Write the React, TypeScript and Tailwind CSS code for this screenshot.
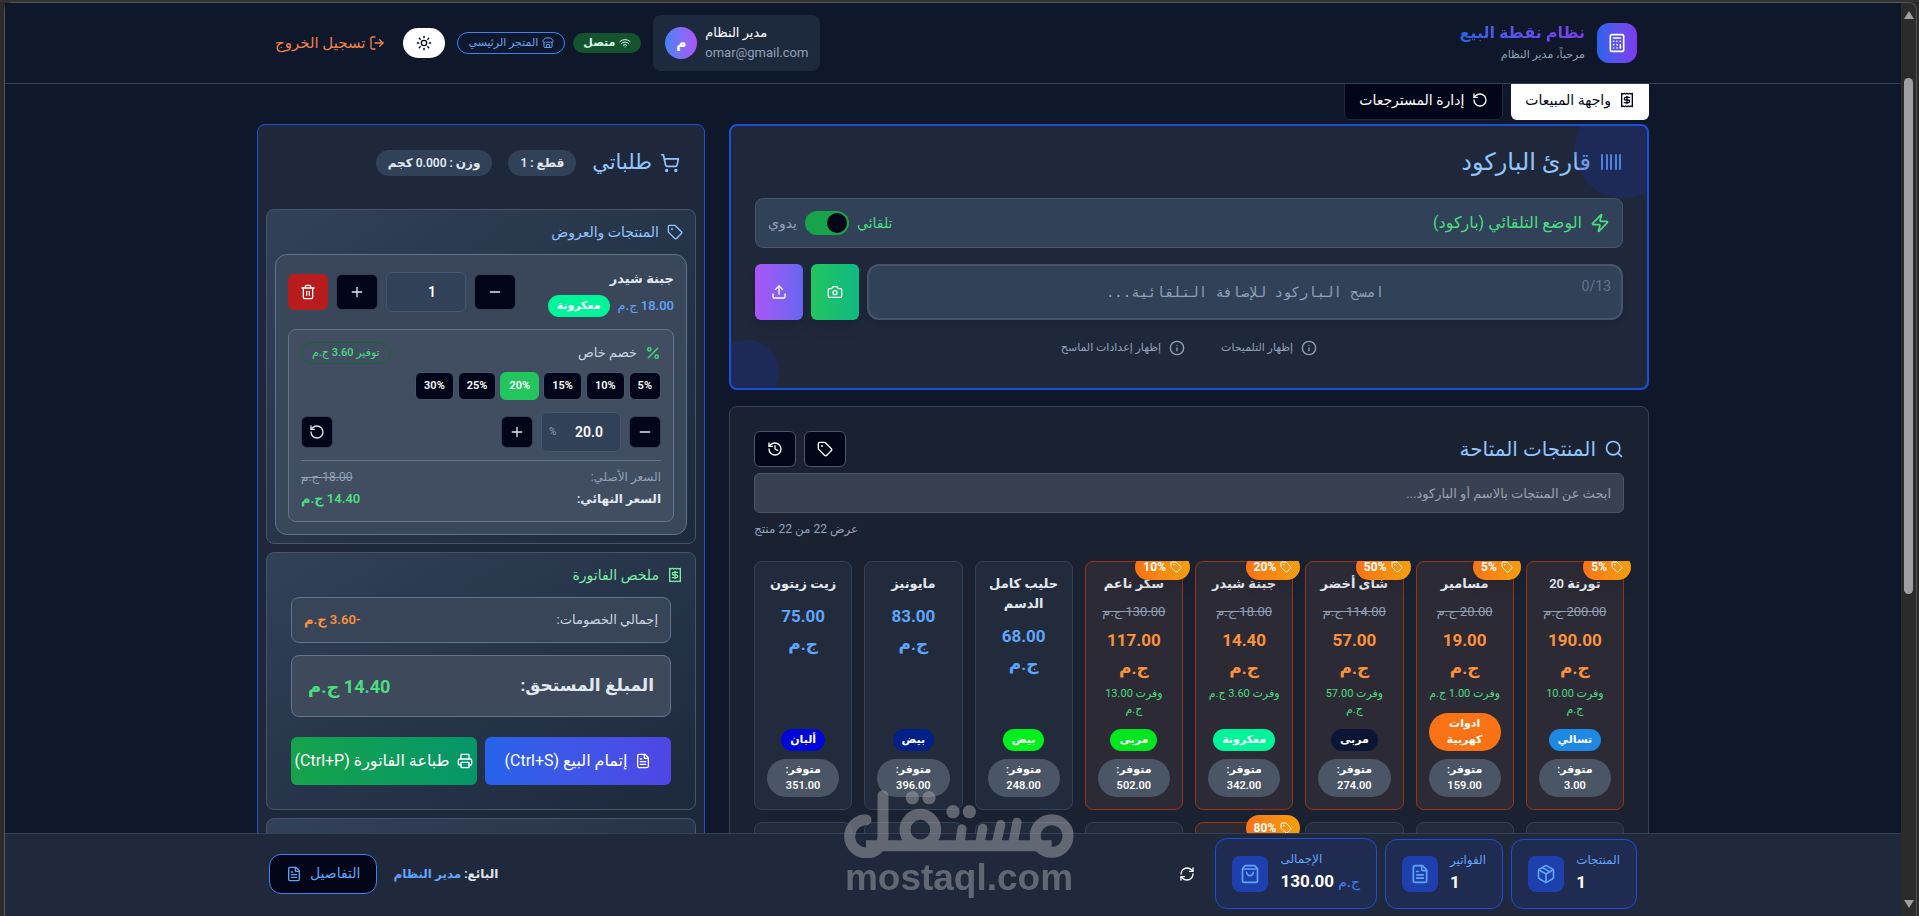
import { useState, type ReactNode } from "react";
import {
  Barcode,
  Calculator,
  Camera,
  FileText,
  History,
  Info,
  LogOut,
  Minus,
  Package,
  Percent,
  Plus,
  Printer,
  Receipt,
  RefreshCw,
  RotateCcw,
  Search,
  ShoppingBag,
  ShoppingCart,
  Store,
  Sun,
  Tag,
  Trash2,
  Upload,
  Wifi,
  Zap,
} from "lucide-react";

type Product = {
  name: string;
  price: string;
  oldPrice?: string;
  saved?: string;
  discount?: number;
  category: string;
  color: string;
  stock: string;
};

const products: Product[] = [
  { name: "تورتة 20", price: "190.00", oldPrice: "200.00", saved: "10.00", discount: 5, category: "تسالي", color: "bg-[#1e88e5]", stock: "3.00" },
  { name: "مسامير", price: "19.00", oldPrice: "20.00", saved: "1.00", discount: 5, category: "ادوات كهربية", color: "bg-[#f97316]", stock: "159.00" },
  { name: "شاى أخضر", price: "57.00", oldPrice: "114.00", saved: "57.00", discount: 50, category: "مربى", color: "bg-[#0b1636]", stock: "274.00" },
  { name: "جبنة شيدر", price: "14.40", oldPrice: "18.00", saved: "3.60", discount: 20, category: "معكرونة", color: "bg-[#00f59b]", stock: "342.00" },
  { name: "سكر ناعم", price: "117.00", oldPrice: "130.00", saved: "13.00", discount: 10, category: "مربى", color: "bg-[#00e61f]", stock: "502.00" },
  { name: "حليب كامل الدسم", price: "68.00", category: "بيض", color: "bg-[#00f01e]", stock: "248.00" },
  { name: "مايونيز", price: "83.00", category: "بيض", color: "bg-[#001f87]", stock: "396.00" },
  { name: "زيت زيتون", price: "75.00", category: "ألبان", color: "bg-[#0007d6]", stock: "351.00" },
];

const loadingCards: (number | null)[] = [null, null, null, 80, null, null, null, null];

const panel = "rounded-lg border border-slate-600 bg-gradient-to-br from-slate-700 to-slate-800";
const darkButton = "flex items-center justify-center rounded-md border border-slate-700 bg-slate-950 text-slate-200";

function Header() {
  return (
    <header className="shrink-0 border-b border-slate-700 bg-[#0f172a]">
      <div className="mx-auto flex h-20 max-w-[1400px] items-center justify-between px-4">
        <div className="flex items-center gap-3">
          <div className="flex h-10 w-10 items-center justify-center rounded-xl bg-gradient-to-r from-[#2563eb] to-[#7c3aed] text-white">
            <Calculator size={20} />
          </div>
          <div>
            <h1 className="bg-gradient-to-r from-[#2563eb] to-[#7c3aed] bg-clip-text text-[16px] leading-6 font-bold text-transparent">
              نظام نقطة البيع
            </h1>
            <p className="text-[11px] leading-5 text-slate-400">مرحباً، مدير النظام</p>
          </div>
        </div>

        <div className="flex items-center gap-3">
          <div dir="ltr" className="flex h-14 items-center gap-2 rounded-lg bg-slate-800 px-3">
            <div className="flex h-8 w-8 items-center justify-center rounded-full bg-gradient-to-r from-[#3b82f6] to-[#a855f7] text-sm font-bold text-white">
              م
            </div>
            <div>
              <p className="text-[13px] leading-5 font-medium text-white">مدير النظام</p>
              <p className="text-[13px] leading-5 text-slate-400">omar@gmail.com</p>
            </div>
          </div>
          <span className="flex h-5 items-center gap-1 rounded-full bg-[#14532d] px-2.5 text-[11px] font-semibold text-green-100">
            <Wifi size={12} />
            متصل
          </span>
          <span className="-mr-1 flex h-[22px] items-center gap-1 rounded-full border border-[#3b82f6] px-2.5 text-[11px] font-medium text-[#60a5fa]">
            <Store size={12} />
            المتجر الرئيسي
          </span>
          <button aria-label="الوضع الفاتح" className="flex h-[30px] w-[42px] items-center justify-center rounded-full bg-white text-slate-950">
            <Sun size={16} />
          </button>
          <button className="flex items-center gap-1 px-1.5 text-[15px] text-[#f0804c]">
            <LogOut size={16} />
            تسجيل الخروج
          </button>
        </div>
      </div>
    </header>
  );
}

function Scanner() {
  const [auto, setAuto] = useState(true);
  const [code, setCode] = useState("");

  return (
    <section className="relative overflow-hidden rounded-lg border-2 border-[#1d4ed8] bg-[#1e283a] px-6 pt-5 pb-7">
      <h2 className="flex h-8 items-center gap-2 text-[24px] font-medium text-[#93c5fd]">
        <Barcode size={24} className="text-[#60a5fa]" />
        قارئ الباركود
      </h2>

      <div className="mt-5 flex h-[50px] items-center justify-between rounded-lg border border-slate-600 bg-slate-700 px-3">
        <span className="flex items-center gap-2 text-[16px] text-[#4ade80]">
          <Zap size={20} />
          الوضع التلقائي (باركود)
        </span>
        <label className="flex cursor-pointer items-center gap-2 text-[14px]">
          <span className="text-[#4ade80]">تلقائي</span>
          <input type="checkbox" className="sr-only" checked={auto} onChange={(e) => setAuto(e.target.checked)} />
          <span className={`flex h-6 w-11 items-center rounded-full p-0.5 ${auto ? "justify-start bg-[#16a34a]" : "justify-end bg-slate-600"}`}>
            <span className="h-5 w-5 rounded-full bg-slate-950" />
          </span>
          <span className="text-slate-400">يدوي</span>
        </label>
      </div>

      <div className="mt-4 flex gap-2">
        <div className="relative min-w-0 flex-1">
          <input
            aria-label="الباركود"
            value={code}
            maxLength={13}
            onChange={(e) => setCode(e.target.value)}
            placeholder="امسح الباركود للإضافة التلقائية..."
            className="h-14 w-full rounded-xl border-2 border-slate-600 bg-slate-700 px-4 text-center font-['DejaVu_Sans_Mono',monospace] text-[14px] text-white shadow-md placeholder:text-slate-400"
          />
          <span className="absolute top-3 right-3 text-[14px] leading-5 text-slate-500">{code.length}/13</span>
        </div>
        <button aria-label="الكاميرا" className="flex h-14 w-12 items-center justify-center rounded-md bg-gradient-to-r from-[#22c55e] to-[#10b981] text-white shadow-lg">
          <Camera size={16} />
        </button>
        <button aria-label="رفع صورة" className="flex h-14 w-12 items-center justify-center rounded-md bg-gradient-to-r from-[#a855f7] to-[#6366f1] text-white shadow-lg">
          <Upload size={16} />
        </button>
      </div>

      <div className="mt-4 flex items-center justify-center gap-3 text-[11px] text-slate-400">
        <button className="flex h-6 items-center gap-2 px-3">
          <Info size={16} />
          إظهار التلميحات
        </button>
        <button className="flex h-6 items-center gap-2 px-3">
          <Info size={16} />
          إظهار إعدادات الماسح
        </button>
      </div>

      <div className="pointer-events-none absolute -top-6 -right-6 h-24 w-24 rounded-full bg-[#1e32a0]/30" />
      <div className="pointer-events-none absolute -bottom-4 -left-4 h-16 w-16 rounded-full bg-[#1e32a0]/30" />
    </section>
  );
}

function Pill({ className, children }: { className: string; children: ReactNode }) {
  return (
    <span className={`rounded-full border border-transparent bg-origin-border px-2 py-0.5 text-center text-[11px] leading-4 font-semibold text-white ${className}`}>
      {children}
    </span>
  );
}

function DiscountTag({ value }: { value: number }) {
  return (
    <span className="absolute -top-2 -right-2 flex items-center gap-1 rounded-full bg-gradient-to-r from-[#f97316] to-[#f59e0b] px-2 py-[5px] text-[12px] leading-4 font-bold text-white shadow-lg">
      <Tag size={12} />
      {value}%
    </span>
  );
}

function ProductCard({ product }: { product: Product }) {
  const sale = product.discount !== undefined;
  return (
    <button
      className={`relative flex h-[249px] min-w-0 flex-col items-center rounded-lg border p-3 text-center ${
        sale ? "border-[#9a3412] bg-[#2c2a35]" : "border-slate-700 bg-[#222b3b]"
      }`}
    >
      <span className="text-[13px] leading-5 font-semibold text-slate-200">{product.name}</span>
      {sale && <span className="-mx-1 mt-2 text-[13px] leading-5 text-slate-400 line-through">{product.oldPrice} ج.م</span>}
      <span className={`w-14 text-[17px] leading-7 font-bold ${sale ? "mt-1 text-[#fb923c]" : "mt-2 text-[#60a5fa]"}`}>
        {product.price} ج.م
      </span>
      {sale && <span className="mt-1 text-[11px] leading-4 text-[#4ade80]">وفرت {product.saved} ج.م</span>}
      <span className="mt-auto flex w-full flex-col items-center gap-2">
        <Pill className={product.color}>{product.category}</Pill>
        <Pill className="w-full bg-gray-600">متوفر: {product.stock}</Pill>
      </span>
      {product.discount !== undefined && <DiscountTag value={product.discount} />}
    </button>
  );
}

function Products() {
  return (
    <section className="mt-4 rounded-lg border border-slate-700 bg-[#1a2232] p-6">
      <div className="flex h-9 items-center justify-between">
        <h2 className="flex items-center gap-2 text-[20px] font-medium text-[#93c5fd]">
          <Search size={20} />
          المنتجات المتاحة
        </h2>
        <div className="flex gap-2">
          <button aria-label="العروض" className="flex h-9 w-[42px] items-center justify-center rounded-md border border-gray-600 bg-slate-950 text-white">
            <Tag size={16} />
          </button>
          <button aria-label="السجل" className="flex h-9 w-[42px] items-center justify-center rounded-md border border-gray-600 bg-slate-950 text-white">
            <History size={16} />
          </button>
        </div>
      </div>
      <input
        aria-label="بحث"
        placeholder="ابحث عن المنتجات بالاسم أو الباركود..."
        className="mt-1.5 h-10 w-full rounded-md border border-gray-600 bg-[#384151] px-3 text-[13px] text-white placeholder:text-gray-400"
      />
      <p className="mt-1.5 text-left text-[12px] leading-5 text-slate-400">عرض 22 من 22 منتج</p>
      {/* the extra side padding keeps the discount tags from being clipped */}
      <div className="-mx-2 mt-[22px] grid grid-cols-8 gap-3 overflow-hidden px-2">
        {products.map((p) => (
          <ProductCard key={p.name} product={p} />
        ))}
        {loadingCards.map((discount, i) => (
          <div
            key={i}
            className={`relative h-[249px] rounded-lg border ${
              discount ? "border-[#9a3412] bg-[#2c2a35]" : "border-slate-700 bg-[#222b3b]"
            }`}
          >
            {discount && <DiscountTag value={discount} />}
          </div>
        ))}
      </div>
    </section>
  );
}

function OrderItem() {
  const [percent, setPercent] = useState(20);
  const [qty, setQty] = useState(1);

  return (
    <div className="rounded-xl border border-slate-500 bg-[#3a475a] p-3">
      <div className="flex items-center justify-between">
        <div className="flex flex-col gap-1">
          <p className="text-[13px] leading-6 font-semibold text-slate-200">جبنة شيدر</p>
          <div className="flex items-center gap-2">
            <span className="text-[13px] font-medium text-[#60a5fa]">18.00 ج.م</span>
            <Pill className="bg-[#00f59b]">معكرونة</Pill>
          </div>
        </div>
        <div className="flex items-center gap-2">
          <button aria-label="إنقاص" onClick={() => setQty(Math.max(1, qty - 1))} className={`${darkButton} h-9 w-[42px]`}>
            <Minus size={16} />
          </button>
          <input
            aria-label="الكمية"
            value={qty}
            onChange={(e) => setQty(Number(e.target.value) || 1)}
            className="h-10 w-20 rounded-md border border-slate-600 bg-slate-700 pl-3 text-center text-[14px] font-semibold text-white"
          />
          <button aria-label="زيادة" onClick={() => setQty(qty + 1)} className={`${darkButton} h-9 w-[42px]`}>
            <Plus size={16} />
          </button>
          <button aria-label="حذف" className="flex h-9 w-10 items-center justify-center rounded-md bg-[#b91c1c] text-white">
            <Trash2 size={16} />
          </button>
        </div>
      </div>

      <div className="mt-3 rounded-lg border border-slate-500 bg-[#414e61] p-3">
        <div className="flex h-[22px] items-center justify-between">
          <span className="flex items-center gap-2 text-[13px] text-slate-300">
            <Percent size={16} className="text-[#4ade80]" />
            خصم خاص
          </span>
          <span className="rounded-full border border-[#166534] px-2.5 py-0.5 text-[11px] leading-4 font-medium text-[#4ade80]">توفير 3.60 ج.م</span>
        </div>
        <div className="mt-2 flex gap-1">
          {[5, 10, 15, 20, 25, 30].map((n) => (
            <button
              key={n}
              onClick={() => setPercent(n)}
              className={`h-7 rounded-md border px-2 text-[11px] font-semibold text-white ${
                n === percent ? "border-[#22c55e] bg-[#22c55e]" : "border-slate-600 bg-slate-950"
              }`}
            >
              {n}%
            </button>
          ))}
        </div>
        <div className="mt-3 flex items-center justify-between">
          <div className="flex items-center gap-2">
            <button aria-label="إنقاص الخصم" className={`${darkButton} h-8 w-8`} onClick={() => setPercent(Math.max(0, percent - 1))}>
              <Minus size={16} />
            </button>
            <div className="relative">
              <input
                aria-label="نسبة الخصم"
                value={percent.toFixed(1)}
                onChange={(e) => setPercent(Number(e.target.value) || 0)}
                className="h-10 w-20 rounded-md border border-slate-600 bg-slate-700 pl-4 text-center text-[14px] font-semibold text-white"
              />
              <span className="absolute top-3 left-2 text-[10px] leading-4 text-slate-400">%</span>
            </div>
            <button aria-label="زيادة الخصم" className={`${darkButton} h-8 w-8`} onClick={() => setPercent(percent + 1)}>
              <Plus size={16} />
            </button>
          </div>
          <button aria-label="إعادة" className={`${darkButton} h-8 w-8`} onClick={() => setPercent(20)}>
            <RotateCcw size={16} />
          </button>
        </div>
        <div className="mt-2 border-t border-slate-500 pt-2">
          <div className="flex h-4 items-center justify-between text-[12px] text-slate-400">
            <span>السعر الأصلي:</span>
            <span className="line-through">18.00 ج.م</span>
          </div>
          <div className="mt-1 flex h-5 items-center justify-between font-semibold">
            <span className="text-[12px] text-slate-200">السعر النهائي:</span>
            <span className="text-[13px] text-[#4ade80]">14.40 ج.م</span>
          </div>
        </div>
      </div>
    </div>
  );
}

function Orders() {
  return (
    <aside className="rounded-lg border border-[#1d4ed8] bg-[#1e283a] px-2 pb-40">
      <div className="flex h-[84px] items-center gap-4 px-4 pb-2">
        <h2 className="flex items-center gap-2 text-[21px] font-medium text-[#93c5fd]">
          <ShoppingCart size={20} />
          طلباتي
        </h2>
        <span className="flex h-[26px] items-center rounded-full bg-slate-700 px-3 text-[12px] font-semibold text-slate-200">قطع : 1</span>
        <span className="flex h-[26px] items-center rounded-full bg-slate-700 px-3 text-[12px] font-semibold text-slate-200">وزن : 0.000 كجم</span>
      </div>

      <div className={`${panel} p-2`}>
        <h3 className="flex h-9 items-center gap-2 px-1 pb-2 text-[14px] font-medium text-[#93c5fd]">
          <Tag size={16} />
          المنتجات والعروض
        </h3>
        <OrderItem />
      </div>

      <div className={`${panel} mt-2 px-2 pt-2 pb-6`}>
        <h3 className="flex h-9 items-center gap-2 px-1 pb-2 text-[14px] font-medium text-[#7ceba5]">
          <Receipt size={16} />
          ملخص الفاتورة
        </h3>
        <div className="px-4">
          <div className="flex h-[46px] items-center justify-between rounded-lg border border-slate-500 bg-[#384558] px-3">
            <span className="text-[13px] text-slate-300">إجمالي الخصومات:</span>
            <span className="text-[13px] font-semibold text-[#fb923c]">-3.60 ج.م</span>
          </div>
          <div className="mt-3 flex h-[62px] items-center justify-between rounded-lg border border-slate-500 bg-[#3e4a5c] px-4 font-bold">
            <span className="text-[17px] text-slate-200">المبلغ المستحق:</span>
            <span className="text-[18px] text-[#4ade80]">14.40 ج.م</span>
          </div>
          <div className="mt-5 grid grid-cols-2 gap-2 text-[16px] whitespace-nowrap text-white">
            <button className="flex h-12 min-w-0 items-center justify-center gap-2 rounded-md bg-gradient-to-r from-[#2563eb] to-[#4f46e5]">
              <FileText size={16} className="shrink-0" />
              إتمام البيع (Ctrl+S)
            </button>
            <button className="flex h-12 min-w-0 items-center justify-center gap-2 rounded-md bg-gradient-to-r from-[#16a34a] to-[#059669]">
              <Printer size={16} className="shrink-0" />
              طباعة الفاتورة (Ctrl+P)
            </button>
          </div>
        </div>
      </div>

      <div className={`${panel} mt-2 h-40`} />
    </aside>
  );
}

function Stat({ icon, label, children }: { icon: ReactNode; label: string; children: ReactNode }) {
  return (
    <div dir="ltr" className="flex items-center gap-3 rounded-xl border border-[#1d4ed8] bg-[#1f2b50] px-4 py-3">
      <div className="flex h-9 w-9 items-center justify-center rounded-lg bg-[#1e40af] text-[#60a5fa]">{icon}</div>
      <div>
        <p className="text-[12px] leading-4 text-[#60a5fa]">{label}</p>
        <p className="text-[17px] leading-7 font-bold text-white">{children}</p>
      </div>
    </div>
  );
}

function Footer() {
  return (
    <footer className="shrink-0 border-t border-slate-700 bg-[#1f293b]">
      <div className="mx-auto flex max-w-[1400px] items-center justify-between px-4 pt-1 pb-[7px]">
        <div className="flex items-center gap-2">
          <Stat icon={<Package size={20} />} label="المنتجات">1</Stat>
          <Stat icon={<FileText size={20} />} label="الفواتير">1</Stat>
          <Stat icon={<ShoppingBag size={20} />} label="الإجمالى">
            130.00 <span className="text-[14px] font-medium text-[#3b82f6]">ج.م</span>
          </Stat>
          <button aria-label="تحديث" className="px-3 text-white">
            <RefreshCw size={16} />
          </button>
        </div>
        <div className="flex items-center gap-4">
          <p className="text-[12px] font-semibold text-slate-200">
            البائع: <span className="text-[#60a5fa]">مدير النظام</span>
          </p>
          <button className="flex h-10 items-center gap-2 rounded-xl border border-[#3b82f6] bg-slate-950 px-4 text-[14px] font-medium text-[#60a5fa]">
            التفاصيل
            <FileText size={16} />
          </button>
        </div>
      </div>
    </footer>
  );
}

function Watermark() {
  return (
    <div className="pointer-events-none absolute bottom-[18px] left-[839px] flex w-[230px] flex-col items-center text-[#a3a5ab] opacity-50">
      <svg viewBox="312 455 690 205" className="w-full" fill="none" stroke="currentColor" strokeWidth="33" strokeLinecap="round">
        <circle cx="935" cy="593" r="49" />
        <path d="M935 622H378" strokeLinecap="butt" />
        <path d="M831 552L820 612M782 559L770 612M728 570L720 612M666 572L660 612" strokeWidth="28" />
        <circle cx="541" cy="574" r="46" />
        <path d="M429 472V592A50 50 0 1 1 378 544" />
        <g fill="currentColor" stroke="none">
          <circle cx="639" cy="520" r="20" />
          <circle cx="688" cy="520" r="20" />
          <circle cx="517" cy="478" r="20" />
          <circle cx="567" cy="478" r="20" />
        </g>
      </svg>
      <span dir="ltr" className="font-['Liberation_Sans',sans-serif] text-[37px] leading-[40px] font-bold">
        mostaql.com
      </span>
    </div>
  );
}

export default function App() {
  return (
    <div className="flex h-screen overflow-hidden border-t-2 border-[#333333] bg-[#2b2b2b] pr-[2px] pl-1 font-[Roboto,'DejaVu_Sans',sans-serif]">
      <div dir="rtl" className="relative flex min-w-0 flex-1 flex-col rounded-tl-lg border-t border-l border-[#555555] bg-[#0f172a]">
        <Header />
        <main className="min-h-0 flex-1 overflow-hidden">
          <div className="mx-auto max-w-[1400px] px-1">
            <div className="-mt-1 mb-1 flex gap-2 text-[14px] font-medium">
              <button className="flex h-10 items-center gap-2 rounded-md bg-white px-3.5 text-slate-950">
                <Receipt size={16} />
                واجهة المبيعات
              </button>
              <button className="flex h-10 items-center gap-2 rounded-md border border-slate-800 bg-slate-950 px-3.5 text-white">
                <RotateCcw size={16} />
                إدارة المسترجعات
              </button>
            </div>
            <div className="grid grid-cols-3 items-start gap-6">
              <div className="col-span-2 min-w-0">
                <Scanner />
                <Products />
              </div>
              <Orders />
            </div>
          </div>
        </main>
        <Footer />
        <Watermark />
      </div>
      <div className="flex w-4 shrink-0 flex-col items-center rounded-tr-lg border-t border-r border-[#555555] py-1">
        <svg width="10" height="8" viewBox="0 0 10 8" className="mt-1 mb-[59px] shrink-0" fill="#9f9fa3">
          <path d="M5 0L10 8H0Z" />
        </svg>
        <div className="h-[57%] w-[9px] rounded-full bg-[#9f9fa3]" />
        <svg width="10" height="8" viewBox="0 0 10 8" className="mt-auto mb-1 shrink-0" fill="#9f9fa3">
          <path d="M5 8L10 0H0Z" />
        </svg>
      </div>
    </div>
  );
}
